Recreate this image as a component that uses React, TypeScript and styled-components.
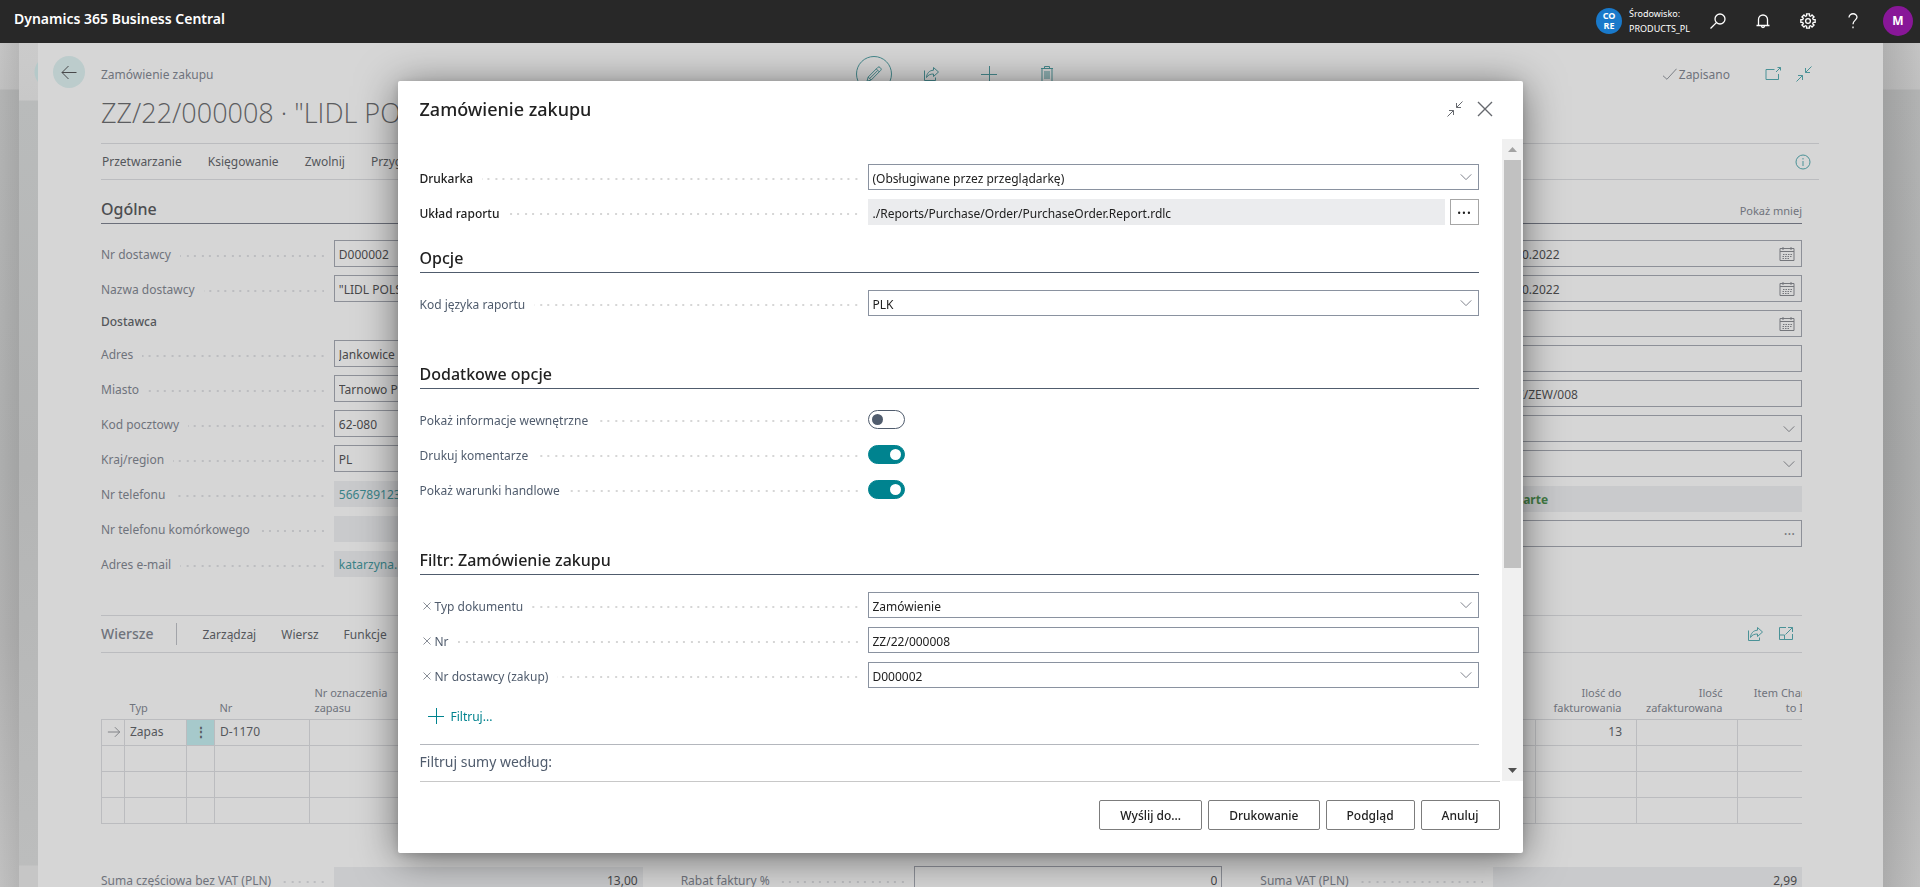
import React, { ReactNode, useId, useState } from "react";
import styled, { createGlobalStyle, css } from "styled-components";

const GlobalStyle = createGlobalStyle`
  *, *::before, *::after { box-sizing: border-box; }
  html, body { margin: 0; height: 100%; overflow: hidden; }
  body, button, input, select { font-family: "Noto Sans", "Open Sans", sans-serif; font-size: 12px; }
  h1, h2, h3, p { margin: 0; }
  button { margin: 0; padding: 0; border: 0; background: none; color: inherit; cursor: pointer; }
  svg { display: block; flex: none; }
`;

/* ---------- icons ---------- */

const Icon = ({ size = 16, weight = 1, children }: { size?: number; weight?: number; children: ReactNode }) => (
  <svg width={size} height={size} viewBox="0 0 16 16" fill="none" stroke="currentColor" strokeWidth={weight} aria-hidden="true">
    {children}
  </svg>
);

const ArrowLeft = () => <Icon><path d="M15.5 8.5H1M7.5 2 1 8.5 7.5 15" /></Icon>;
const ArrowRight = () => <Icon size={14}><path d="M1 8h13.500M9 2.500 14.500 8 9 13.500" /></Icon>;
const PlusIcon = () => <Icon size={16}><path d="M8.500 0v16M0 8.500h16" /></Icon>;
const CloseIcon = ({ size = 16 }: { size?: number }) => <Icon size={size} weight={size < 12 ? 2 : 1.4}><path d="M1 1l14 14M15 1 1 15" /></Icon>;
const PencilIcon = () => (
  <Icon><path d="M1 15.200l1.200-4.200L11.700 1.500a1.600 1.600 0 0 1 2.400 0l.6.600a1.600 1.600 0 0 1 0 2.300L5.200 14zM10.300 2.900l3 3M2.200 11l3 3M3.800 12.400l8-8" /></Icon>
);
const ShareIcon = () => (
  <Icon><path d="M1.500 4.500v10h11v-3M10.500 1.500 15.500 6l-5 4.500V8C7 8 5 9 3.500 11.500 3.800 7.500 6 4.500 10.500 4.200z" /></Icon>
);
const TrashIcon = () => (
  <Icon><path d="M2 2.500h12M5.500 2.500v-2h5v2M3 2.500v13h10v-13M6 5v8M8 5v8M10 5v8" /></Icon>
);
const CheckIcon = () => <Icon size={14}><path d="M0 10l4.500 4L15.500 2" /></Icon>;
const PopOutIcon = () => <Icon><path d="M9.500 3.500H1v10h12.500V8M11 6l4.500-4.500M12.500 1.500h3v3" /></Icon>;
const CollapseIcon = () => <Icon><path d="M15.500 .5l-6 6M9.500 2v4.500H14M.5 15.500l6-6M2 9.500h4.500V14" /></Icon>;
const ExpandIcon = () => <Icon><path d="M8 1.500H1.500v12h13V8M10 1.500h4.500V6M14.500 1.500l-7 7M1.500 9H6.500v4.500" /></Icon>;
const InfoIcon = () => <Icon><circle cx="8" cy="8" r="7" /><path d="M8 7v5M8 4v1.500" /></Icon>;
const ChevronIcon = () => <Icon size={12}><path d="M1 4.500l7 7 7-7" strokeWidth="1.300" /></Icon>;
const CalendarIcon = () => (
  <Icon>
    <path d="M1 2.500h14v12H1zM1 5.500h14M4 1v3M12 1v3" />
    <path d="M4 8.500h9M3.500 10.500h9M3.500 12.500h7" strokeDasharray="1.500 1" />
  </Icon>
);
const SearchIcon = () => <Icon weight={1.3}><circle cx="10" cy="6" r="5" /><path d="M6.400 9.600.5 15.500" /></Icon>;
const BellIcon = () => (
  <Icon weight={1.3}><path d="M3.500 12.500V6.500a4.500 4.500 0 0 1 9 0v6M1.500 12.500h13M6.500 13c0 2 3 2 3 0" /></Icon>
);
const gearPath = (() => {
  const points: string[] = [];
  for (let i = 0; i < 8; i++) {
    const middle = (i * Math.PI) / 4;
    [[-0.26, 5.4], [-0.2, 7.3], [0.2, 7.3], [0.26, 5.4]].forEach(([turn, radius]) => {
      points.push(`${(8 + radius * Math.cos(middle + turn)).toFixed(2)} ${(8 + radius * Math.sin(middle + turn)).toFixed(2)}`);
    });
  }
  return `M${points.join("L")}Z`;
})();
const GearIcon = () => <Icon weight={1.3}><path d={gearPath} /><circle cx="8" cy="8" r="2.400" /></Icon>;
const HelpIcon = () => <Icon weight={1.3}><path d="M4 4.500C4 -.6 12.200-.3 12 4.300 11.900 7 8 7.500 8 11.200M8 13.500v1.800" /></Icon>;
const Triangle = ({ up }: { up?: boolean }) => (
  <svg width="9" height="5" viewBox="0 0 9 5" aria-hidden="true"><path d={up ? "M0 5 4.500 0 9 5z" : "M0 0h9L4.500 5z"} fill="currentColor" /></svg>
);

/* ---------- application bar ---------- */

const TopBar = styled.header`
  display: flex;
  align-items: center;
  flex: none;
  height: 43px;
  padding: 0 7px 2px 14px;
  background: #282828;
  color: #fff;
`;
const Brand = styled.a`
  flex: 1;
  padding-bottom: 4px;
  color: #fff;
  font-size: 14px;
  font-weight: 600;
  text-decoration: none;
`;
const EnvBadge = styled.span`
  display: grid;
  place-items: center;
  width: 26px;
  height: 26px;
  margin-right: 7px;
  border-radius: 50%;
  background: #1979ca;
  font-size: 9px;
  font-weight: 700;
  line-height: 10px;
  text-align: center;
`;
const EnvName = styled.span`
  width: 66px;
  font-size: 9px;
  line-height: 15px;
`;
const BarButton = styled.button`
  display: grid;
  place-items: center;
  width: 45px;
  height: 41px;
`;
const Avatar = styled.button`
  width: 30px;
  height: 30px;
  margin-left: 8px;
  border-radius: 50%;
  background: #881798;
  font-weight: 700;
`;

/* ---------- stacked page layers ---------- */

const Shell = styled.div`
  display: flex;
  flex-direction: column;
  height: 100vh;
`;
const BackLayer = styled.div`
  display: flex;
  flex: 1;
  min-height: 0;
  padding: 0 37px 0 19px;
  background:
    linear-gradient(90deg, transparent 0, rgba(0, 0, 0, 0.06) 19px, transparent 19px, transparent calc(100% - 37px), rgba(0, 0, 0, 0.1) calc(100% - 37px), transparent),
    linear-gradient(#c4c4c4 0, #c0c0c0 46px, #b2b3b3 47px, #adaeae 50%, #b0b0b0 70%, #c0c0c0 100%);
`;
const MiddleLayer = styled.div`
  display: flex;
  flex: 1;
  min-width: 0;
  padding-left: 19px;
  background:
    radial-gradient(circle at 31px 29px, #b5c9c9 15px, transparent 16px),
    linear-gradient(#cbcbcb 0, #c8c8c8 57px, #b9bbbb 58px, #b4b5b5 50%, #bcbdbd calc(100% - 22px), #c6c6c6 calc(100% - 21px));
`;
const Page = styled.main`
  display: flex;
  flex-direction: column;
  flex: 1;
  min-width: 0;
  overflow: hidden;
  background: #d6d6d6;
  color: #54565b;
`;
const PageHead = styled.div`
  display: grid;
  grid-template-columns: 1fr auto 1fr;
  align-items: center;
  flex: none;
  height: 62px;
  padding: 0 71px 0 15px;
`;
const HeadLeft = styled.div`
  display: flex;
  align-items: center;
  gap: 16px;
  color: #6f737c;
`;
const BackButton = styled.button`
  display: grid;
  place-items: center;
  width: 32px;
  height: 32px;
  margin-bottom: 4px;
  border-radius: 50%;
  background: #bccccc;
  color: #48484a;
`;
const HeadActions = styled.div`
  display: flex;
  align-items: center;
  gap: 42px;
  margin-left: 45px;
  color: #46898d;
`;
const EditButton = styled.button`
  display: grid;
  place-items: center;
  width: 36px;
  height: 36px;
  margin-right: -11px;
  border: 1px solid #46898d;
  border-radius: 50%;
`;
const HeadRight = styled.div`
  display: flex;
  align-items: center;
  justify-content: flex-end;
  gap: 15px;
  color: #4a9297;
`;
const Saved = styled.span`
  display: flex;
  align-items: center;
  gap: 2px;
  margin-right: 20px;
  color: #6f737c;
`;
const PageBody = styled.div`
  flex: none;
  padding: 0 81px 0 63px;
`;
const RecordTitle = styled.h1`
  height: 38px;
  color: #5c5d60;
  font-family: "Open Sans", "Noto Sans", sans-serif;
  font-size: 27px;
  font-weight: 300;
  line-height: 16px;
  white-space: nowrap;
`;
const MenuBar = styled.nav`
  display: flex;
  align-items: center;
  gap: 26px;
  height: 37px;
  margin-right: -17px;
  padding: 0 8px 0 1px;
  border-top: 1px solid #bbbcbf;
  border-bottom: 1px solid #bbbcbf;
`;
const Push = styled.span`
  flex: 1;
`;
const TealButton = styled.button`
  color: #4a9297;
`;
const FastTab = styled.div`
  display: flex;
  align-items: flex-end;
  justify-content: space-between;
  height: 44px;
  padding-bottom: 2px;
  border-bottom: 1px solid #6b6f7a;
`;
const FastTabTitle = styled.h2`
  color: #4c4d50;
  font-size: 16px;
  font-weight: 500;
  line-height: 24px;
`;
const ShowLess = styled.button`
  color: #6f737c;
  font-size: 11px;
  line-height: 20px;
`;
const Columns = styled.div`
  display: grid;
  grid-template-columns: repeat(3, 1fr);
  gap: 38px;
`;
const GeneralColumns = styled(Columns)`
  height: 391px;
  padding-top: 16px;
`;
const FieldColumn = styled.div`
  display: flex;
  flex-direction: column;
  gap: 8px;
`;
const GroupTitle = styled.h3`
  height: 22px;
  color: #54565b;
  font-size: 12px;
  font-weight: 500;
  line-height: 24px;
`;

/* ---------- form rows ---------- */

const Row = styled.div<{ $dialog?: boolean }>`
  display: grid;
  grid-template-columns: ${(p) => (p.$dialog ? "448fr 611fr" : "233fr 309fr")};
  align-items: center;
  height: ${(p) => (p.$dialog ? 26 : 27)}px;
`;
const LabelCell = styled.div<{ $dialog?: boolean }>`
  display: flex;
  align-items: center;
  gap: 3px;
  padding: 2px 10px 0 0;
  &::after {
    content: "";
    flex: 1;
    height: 2px;
    margin: 2px 0 0 6px;
    background: linear-gradient(
      90deg,
      transparent 5px,
      ${(p) => (p.$dialog ? "#d6d6d6" : "#bcbdc0")} 5px 7px,
      transparent 7px 13px,
      ${(p) => (p.$dialog ? "#d6d6d6" : "#bcbdc0")} 13px
    ) right center / 15px 2px;
  }
`;
const FieldLabel = styled.label<{ $dialog?: boolean; $strong?: boolean }>`
  color: ${(p) => (p.$strong ? "#212121" : p.$dialog ? "#505c6d" : "#6f737c")};
  font-weight: ${(p) => (p.$strong ? 500 : 400)};
  white-space: nowrap;
`;
const RemoveFilter = styled.button`
  display: grid;
  place-items: center;
  width: 12px;
  padding-left: 2px;
  color: #8a8f98;
`;
const ControlBox = styled.div`
  display: grid;
  align-items: center;
  height: 100%;
  > * { grid-area: 1 / 1; }
`;
const boxStyle = css<{ $dialog?: boolean; $tone?: string; $strong?: boolean; $right?: boolean }>`
  width: 100%;
  height: 100%;
  min-width: 0;
  margin: 0;
  padding: 2px 4px 0;
  border: 1px solid ${(p) => (p.$dialog ? "#8a92a0" : "#8d9098")};
  border-radius: 0;
  background: transparent;
  color: ${(p) => p.$tone ?? (p.$dialog ? "#212121" : "#48484a")};
  font-weight: ${(p) => (p.$strong ? 700 : 400)};
  text-align: ${(p) => (p.$right ? "right" : "left")};
  &:read-only:not(select) {
    height: 26px;
    border-color: transparent;
    background: ${(p) => (p.$dialog ? "#ebecee" : "#c9cacc")};
    background-clip: border-box;
  }
`;
const TextBox = styled.input`${boxStyle}`;
const SelectBox = styled.select`
  ${boxStyle}
  appearance: none;
`;
const Adornment = styled.span<{ $dialog?: boolean }>`
  justify-self: end;
  margin-right: 7px;
  color: ${(p) => (p.$dialog ? "#7b808a" : "#75777c")};
  font-size: 14px;
  line-height: 12px;
  pointer-events: none;
`;

type FieldProps = {
  label: string;
  value?: string;
  kind?: "text" | "select" | "readonly" | "date" | "assist";
  dialog?: boolean;
  strong?: boolean;
  removable?: boolean;
  tone?: string;
  bold?: boolean;
  right?: boolean;
  children?: (id: string) => ReactNode;
};

const Field = ({ label, value = "", kind = "text", dialog, strong, removable, tone, bold, right, children }: FieldProps) => {
  const id = useId();
  return (
    <Row $dialog={dialog}>
      <LabelCell $dialog={dialog}>
        {removable && <RemoveFilter aria-label={`Usuń filtr ${label}`}><CloseIcon size={8} /></RemoveFilter>}
        <FieldLabel htmlFor={id} $dialog={dialog} $strong={strong}>{label}</FieldLabel>
      </LabelCell>
      {children ? children(id) : (
        <ControlBox>
          {kind === "select" ? (
            <SelectBox id={id} $dialog={dialog}><option>{value}</option></SelectBox>
          ) : (
            <TextBox id={id} defaultValue={value} readOnly={kind === "readonly"} $dialog={dialog} $tone={tone} $strong={bold} $right={right} />
          )}
          {kind === "select" && <Adornment $dialog={dialog}><ChevronIcon /></Adornment>}
          {kind === "date" && <Adornment><CalendarIcon /></Adornment>}
          {kind === "assist" && <Adornment>···</Adornment>}
        </ControlBox>
      )}
    </Row>
  );
};

/* ---------- order lines ---------- */

const LinesBar = styled.div`
  display: flex;
  align-items: center;
  gap: 25px;
  height: 38px;
  padding-right: 8px;
  border-top: 1px solid #bbbcbf;
  border-bottom: 1px solid #bbbcbf;
`;
const LinesTools = styled.div`
  display: flex;
  gap: 15px;
`;
const LinesTitle = styled.h2`
  padding-right: 23px;
  border-right: 1px solid #a2a4a9;
  color: #6f737c;
  font-size: 14px;
  font-weight: 500;
  line-height: 22px;
`;
const TableClip = styled.div`
  height: 213px;
  padding-top: 28px;
  overflow: hidden;
`;
const LinesTable = styled.table`
  width: calc(100% + 37px);
  border-collapse: collapse;
  table-layout: fixed;
  th {
    height: 38px;
    padding: 0 15px 4px 5px;
    color: #6f737c;
    font-size: 11px;
    font-weight: 400;
    line-height: 15px;
    text-align: left;
    vertical-align: bottom;
    white-space: nowrap;
  }
  td {
    height: 26px;
    padding: 0 14px 0 5px;
    border: 1px solid #bbbcbf;
    font-size: 12px;
    line-height: 18px;
  }
`;
const Col = styled.col<{ $w?: number }>`
  width: ${(p) => (p.$w ? `${p.$w}px` : "auto")};
`;
const NumHead = styled.th`
  && { text-align: right; }
`;
const NumCell = styled.td`
  text-align: right;
`;
const MarkCell = styled.td`
  && { padding: 0 0 0 5px; color: #75777c; }
`;
const MenuCell = styled.td`
  && { padding: 0; background: #a6c9cb; text-align: center; }
`;
const MenuDots = styled.button`
  width: 100%;
  font-weight: 700;
`;

/* ---------- report dialog ---------- */

const Backdrop = styled.div`
  position: fixed;
  inset: 0;
  display: flex;
  justify-content: center;
  padding: 81px 16px 34px;
`;
const Dialog = styled.section`
  display: flex;
  flex-direction: column;
  width: 100%;
  max-width: 1125px;
  border-radius: 2px;
  background: #fff;
  box-shadow: 0 2px 8px rgba(0, 0, 0, 0.14), 0 5px 40px rgba(0, 0, 0, 0.5);
  clip-path: inset(-38px -60px -60px);
  color: #212121;
`;
const DialogHead = styled.div`
  display: flex;
  align-items: center;
  flex: none;
  gap: 14px;
  height: 58px;
  padding: 0 30px 2px 22px;
  color: #66696e;
`;
const DialogTitle = styled.h1`
  flex: 1;
  color: #212121;
  font-size: 18px;
  font-weight: 500;
`;
const DialogMain = styled.div`
  display: flex;
  flex: 1;
  min-height: 0;
`;
const DialogBody = styled.div`
  flex: 1;
  min-width: 0;
  padding: 25px 23px 0 22px;
  overflow: hidden;
`;
const Fields = styled.div`
  display: flex;
  flex-direction: column;
  gap: 9px;
`;
const Group = styled.section<{ $first?: boolean }>`
  margin-top: ${(p) => (p.$first ? 21 : 46)}px;
`;
const GroupHeading = styled.h2`
  margin-bottom: 17px;
  padding-bottom: 2px;
  border-bottom: 1px solid #505c6d;
  font-size: 16px;
  font-weight: 500;
  line-height: 24px;
`;
const WithButton = styled.div`
  display: flex;
  gap: 5px;
  height: 26px;
`;
const MoreButton = styled.button`
  flex: none;
  width: 29px;
  border: 1px solid #a6a6a6;
  font-size: 18px;
  line-height: 20px;
`;
const Switch = styled.input`
  display: flex;
  align-items: center;
  appearance: none;
  width: 37px;
  height: 19px;
  margin: 0;
  padding: 0 3px;
  border: 1px solid #505c6d;
  border-radius: 10px;
  &::before {
    content: "";
    width: 11px;
    height: 11px;
    border-radius: 50%;
    background: #505c6d;
  }
  &:checked {
    justify-content: flex-end;
    border-color: #00838f;
    background: #00838f;
  }
  &:checked::before { background: #fff; }
`;
const AddFilter = styled.button`
  display: flex;
  align-items: center;
  gap: 7px;
  height: 36px;
  margin: 10px 0 10px 8px;
  color: #00838f;
`;
const TotalsHeading = styled.h2`
  border-top: 1px solid #b4b7bd;
  color: #505c6d;
  font-size: 14px;
  font-weight: 400;
  line-height: 33px;
`;
const ScrollTrack = styled.div`
  display: flex;
  flex-direction: column;
  align-items: center;
  flex: none;
  width: 21px;
  background: #f0f0f0;
`;
const ScrollArrow = styled.span<{ $dim?: boolean }>`
  display: grid;
  place-items: center;
  flex: none;
  height: 21px;
  color: ${(p) => (p.$dim ? "#a3a3a3" : "#505050")};
`;
const ScrollThumb = styled.div`
  flex: 68;
  width: 17px;
  background: #c1c1c1;
`;
const ScrollRest = styled.div`
  flex: 32;
`;
const DialogFoot = styled.footer`
  display: flex;
  justify-content: flex-end;
  flex: none;
  gap: 6px;
  height: 72px;
  margin: 0 23px 0 22px;
  padding-top: 18px;
  border-top: 1px solid #c8c8c8;
`;
const FootButton = styled.button`
  height: 30px;
  padding: 0 20px;
  border: 1px solid #7c7c7c;
  border-radius: 2px;
  font-weight: 500;
`;

const ToggleField = ({ label, initial }: { label: string; initial: boolean }) => {
  const [on, setOn] = useState(initial);
  return (
    <Field label={label} dialog>
      {(id) => <Switch id={id} type="checkbox" role="switch" checked={on} onChange={() => setOn(!on)} />}
    </Field>
  );
};

const ReportDialog = () => (
  <Backdrop>
    <Dialog role="dialog" aria-modal="true" aria-labelledby="dialog-title">
      <DialogHead>
        <DialogTitle id="dialog-title">Zamówienie zakupu</DialogTitle>
        <button aria-label="Zmniejsz"><CollapseIcon /></button>
        <button aria-label="Zamknij"><CloseIcon /></button>
      </DialogHead>
      <DialogMain>
        <DialogBody>
          <Fields>
            <Field dialog strong label="Drukarka" kind="select" value="(Obsługiwane przez przeglądarkę)" />
            <Field dialog strong label="Układ raportu">
              {(id) => (
                <WithButton>
                  <TextBox id={id} readOnly defaultValue="./Reports/Purchase/Order/PurchaseOrder.Report.rdlc" $dialog />
                  <MoreButton aria-label="Wybierz układ">···</MoreButton>
                </WithButton>
              )}
            </Field>
          </Fields>
          <Group $first>
            <GroupHeading>Opcje</GroupHeading>
            <Fields><Field dialog label="Kod języka raportu" kind="select" value="PLK" /></Fields>
          </Group>
          <Group>
            <GroupHeading>Dodatkowe opcje</GroupHeading>
            <Fields>
              <ToggleField label="Pokaż informacje wewnętrzne" initial={false} />
              <ToggleField label="Drukuj komentarze" initial />
              <ToggleField label="Pokaż warunki handlowe" initial />
            </Fields>
          </Group>
          <Group>
            <GroupHeading>Filtr: Zamówienie zakupu</GroupHeading>
            <Fields>
              <Field dialog removable label="Typ dokumentu" kind="select" value="Zamówienie" />
              <Field dialog removable label="Nr" value="ZZ/22/000008" />
              <Field dialog removable label="Nr dostawcy (zakup)" kind="select" value="D000002" />
            </Fields>
            <AddFilter><PlusIcon />Filtruj...</AddFilter>
            <TotalsHeading>Filtruj sumy według:</TotalsHeading>
          </Group>
        </DialogBody>
        <ScrollTrack>
          <ScrollArrow $dim><Triangle up /></ScrollArrow>
          <ScrollThumb />
          <ScrollRest />
          <ScrollArrow><Triangle /></ScrollArrow>
        </ScrollTrack>
      </DialogMain>
      <DialogFoot>
        <FootButton>Wyślij do...</FootButton>
        <FootButton>Drukowanie</FootButton>
        <FootButton>Podgląd</FootButton>
        <FootButton>Anuluj</FootButton>
      </DialogFoot>
    </Dialog>
  </Backdrop>
);

const OrderLines = () => (
  <TableClip>
    <LinesTable>
      <colgroup>
        {[23, 62, 28, 95, 0, 101, 101, 101].map((w, i) => <Col key={i} $w={w} />)}
      </colgroup>
      <thead>
        <tr>
          <th />
          <th>Typ</th>
          <th />
          <th>Nr</th>
          <th>Nr oznaczenia<br />zapasu</th>
          <NumHead>Ilość do<br />fakturowania</NumHead>
          <NumHead>Ilość<br />zafakturowana</NumHead>
          <NumHead>Item Charges<br />to Item</NumHead>
        </tr>
      </thead>
      <tbody>
        <tr>
          <MarkCell><ArrowRight /></MarkCell>
          <td>Zapas</td>
          <MenuCell><MenuDots aria-label="Więcej opcji">⋮</MenuDots></MenuCell>
          <td>D-1170</td>
          <td />
          <NumCell>13</NumCell>
          <td />
          <td />
        </tr>
        {[0, 1, 2].map((r) => (
          <tr key={r}>{[0, 1, 2, 3, 4, 5, 6, 7].map((c) => <td key={c} />)}</tr>
        ))}
      </tbody>
    </LinesTable>
  </TableClip>
);

const LINK = "#3a8388";

export default function App() {
  return (
    <>
      <GlobalStyle />
      <Shell>
        <TopBar>
          <Brand href="#">Dynamics 365 Business Central</Brand>
          <EnvBadge>CO<br />RE</EnvBadge>
          <EnvName>Środowisko:<br />PRODUCTS_PL</EnvName>
          <BarButton aria-label="Szukaj"><SearchIcon /></BarButton>
          <BarButton aria-label="Powiadomienia"><BellIcon /></BarButton>
          <BarButton aria-label="Ustawienia"><GearIcon /></BarButton>
          <BarButton aria-label="Pomoc"><HelpIcon /></BarButton>
          <Avatar aria-label="Konto">M</Avatar>
        </TopBar>
        <BackLayer>
          <MiddleLayer>
            <Page>
              <PageHead>
                <HeadLeft>
                  <BackButton aria-label="Wstecz"><ArrowLeft /></BackButton>
                  Zamówienie zakupu
                </HeadLeft>
                <HeadActions>
                  <EditButton aria-label="Edytuj"><PencilIcon /></EditButton>
                  <button aria-label="Udostępnij"><ShareIcon /></button>
                  <button aria-label="Nowy"><PlusIcon /></button>
                  <button aria-label="Usuń"><TrashIcon /></button>
                </HeadActions>
                <HeadRight>
                  <Saved><CheckIcon />Zapisano</Saved>
                  <button aria-label="Otwórz w nowym oknie"><PopOutIcon /></button>
                  <button aria-label="Zwiń"><CollapseIcon /></button>
                </HeadRight>
              </PageHead>
              <PageBody>
                <RecordTitle>ZZ/22/000008 · "LIDL POLSKA"</RecordTitle>
                <MenuBar>
                  <button>Przetwarzanie</button>
                  <button>Księgowanie</button>
                  <button>Zwolnij</button>
                  <button>Przygotuj</button>
                  <Push />
                  <TealButton aria-label="Informacje"><InfoIcon /></TealButton>
                </MenuBar>
                <FastTab>
                  <FastTabTitle>Ogólne</FastTabTitle>
                  <ShowLess>Pokaż mniej</ShowLess>
                </FastTab>
                <GeneralColumns>
                  <FieldColumn>
                    <Field label="Nr dostawcy" value="D000002" />
                    <Field label="Nazwa dostawcy" value={'"LIDL POLSKA"'} />
                    <GroupTitle>Dostawca</GroupTitle>
                    <Field label="Adres" value="Jankowice" />
                    <Field label="Miasto" value="Tarnowo Podgórne" />
                    <Field label="Kod pocztowy" value="62-080" />
                    <Field label="Kraj/region" value="PL" />
                    <Field label="Nr telefonu" value="566789123" kind="readonly" tone={LINK} />
                    <Field label="Nr telefonu komórkowego" kind="readonly" />
                    <Field label="Adres e-mail" value="katarzyna.nowak" kind="readonly" tone={LINK} />
                  </FieldColumn>
                  <FieldColumn />
                  <FieldColumn>
                    <Field label="Data dokumentu" value="26.10.2022" kind="date" />
                    <Field label="Data księgowania" value="26.10.2022" kind="date" />
                    <Field label="Termin płatności" kind="date" />
                    <Field label="Nr oferty" />
                    <Field label="Nr zamówienia" value="DOK/ZEW/008" />
                    <Field label="Kod zakupu" kind="select" />
                    <Field label="Kod lokalizacji" kind="select" />
                    <Field label="Status" value="Otwarte" kind="readonly" tone="#437c45" bold />
                    <Field label="Dokument" kind="assist" />
                  </FieldColumn>
                </GeneralColumns>
                <LinesBar>
                  <LinesTitle>Wiersze</LinesTitle>
                  <button>Zarządzaj</button>
                  <button>Wiersz</button>
                  <button>Funkcje</button>
                  <Push />
                  <LinesTools>
                    <TealButton aria-label="Udostępnij wiersze"><ShareIcon /></TealButton>
                    <TealButton aria-label="Powiększ"><ExpandIcon /></TealButton>
                  </LinesTools>
                </LinesBar>
                <OrderLines />
                <Columns>
                  <Field label="Suma częściowa bez VAT (PLN)" value="13,00" kind="readonly" right />
                  <Field label="Rabat faktury %" value="0" right />
                  <Field label="Suma VAT (PLN)" value="2,99" kind="readonly" right />
                </Columns>
              </PageBody>
            </Page>
          </MiddleLayer>
        </BackLayer>
      </Shell>
      <ReportDialog />
    </>
  );
}
